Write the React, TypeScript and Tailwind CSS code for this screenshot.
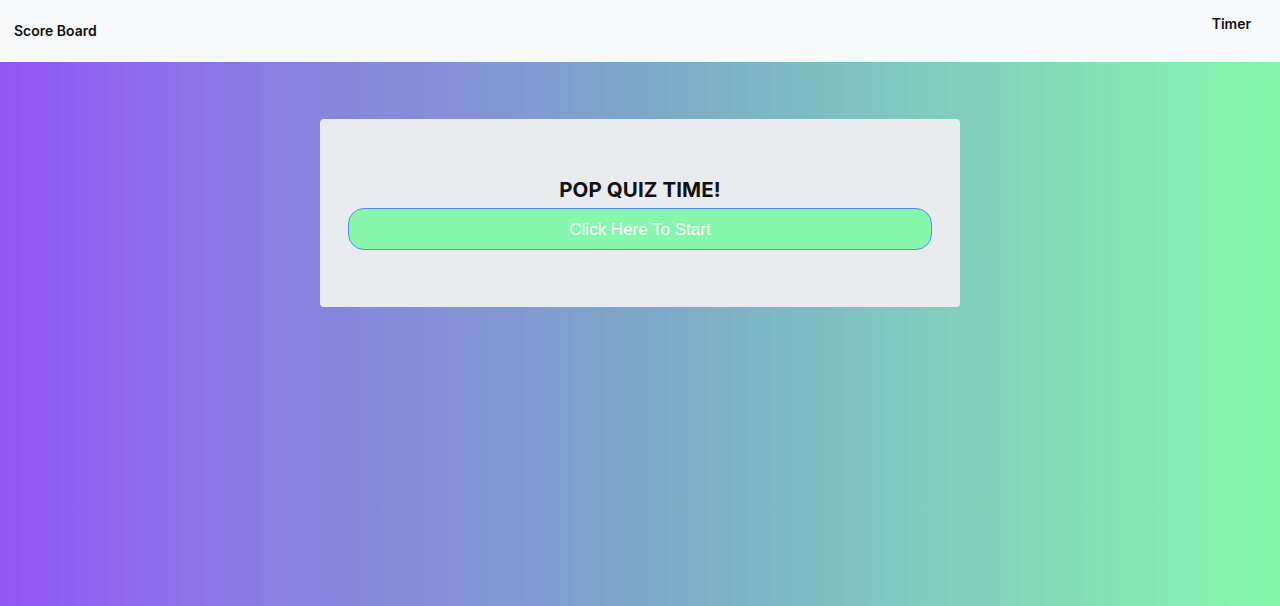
// Pop quiz landing: header with score board + timer, start card on gradient.

export default function App() {
  return (
    <div className="flex h-[606px] w-full flex-col font-['Inter',sans-serif]">
      {/* Top bar */}
      <header className="flex h-[62px] shrink-0 items-start justify-between bg-[#f8f9fa] px-[14px]">
        <span className="mt-[21px] text-sm font-semibold text-[#111]">Score Board</span>
        <span className="mr-[15px] mt-[14px] text-sm font-semibold text-[#111]">Timer</span>
      </header>

      {/* Gradient stage */}
      <main className="flex flex-1 justify-center bg-gradient-to-r from-[#9155f4] via-[#7ba7c8] to-[#86f8ab] pt-[57px]">
        <div className="flex h-[188px] w-[640px] flex-col items-center rounded bg-[#eaebef] px-[28px] pt-[58px]">
          <h1 className="text-[20.5px] font-bold leading-[26px] tracking-[0.1px] text-[#111]">POP QUIZ TIME!</h1>
          <button className="mt-[5px] h-[42px] w-full rounded-2xl border border-[#5b8cf5] bg-[#86f8ab] pt-[2px] font-['Liberation_Sans',sans-serif] text-[17px] text-white">
            Click Here To Start
          </button>
        </div>
      </main>
    </div>
  )
}
